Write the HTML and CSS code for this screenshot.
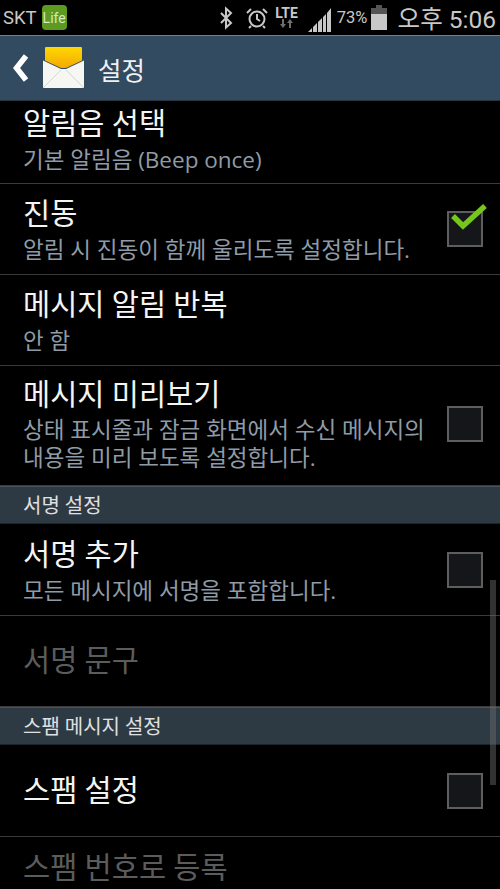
FILE: index.html
```html
<!DOCTYPE html>
<html lang="ko">
    <head>
        <meta charset="UTF-8" />
        <meta name="viewport" content="width=device-width, initial-scale=1.0" />
        <link rel="stylesheet" href="styles.css">
        <title>설정</title>
    </head>
    <body>
        <div class="status-bar">
            <span class="carrier">SKT</span>
            <span class="life-badge"><span>Life</span></span>
            <svg class="ic-bluetooth" width="14" height="24" viewBox="0 0 14 22">
                <path d="M2 6l10 10-5 4.500V1.500l5 4.500L2 16" fill="none" stroke="#c8c8c8" stroke-width="2"/>
            </svg>
            <svg class="ic-alarm" width="22" height="22" viewBox="0 0 22 22">
                <circle cx="11" cy="12" r="7.500" fill="none" stroke="#c8c8c8" stroke-width="2"/>
                <path d="M11 7v5l3 2M1 6l4-4M21 6l-4-4M5 19l-2 2M17 19l2 2" fill="none" stroke="#c8c8c8" stroke-width="2"/>
            </svg>
            <div class="lte">
                <span>LTE</span>
                <svg width="14" height="9" viewBox="0 0 14 9">
                    <path d="M3 9L0 5h2V0h2v5h2zM10 0l3 4h-2v5H9V4H7z" fill="#6e6e6e"/>
                </svg>
            </div>
            <svg class="ic-signal" width="23" height="24" viewBox="0 0 23 24">
                <path d="M0 24l4-4v4zM5 24v-5l4-4v9zM10 24V14l4-4v14zM15 24V9l3-3v18zM19 24V5l4-5v24z" fill="#c8c8c8"/>
            </svg>
            <span class="battery-pct">73%</span>
            <div class="battery"><div class="battery-fill"></div></div>
            <span class="clock">오후 5:06</span>
        </div>

        <div class="action-bar">
            <svg class="ic-back" width="16" height="28" viewBox="0 0 16 28">
                <path d="M14 2L4.500 14l9.500 12" fill="none" stroke="#fff" stroke-width="5.500"/>
            </svg>
            <svg class="ic-mail" width="42" height="42" viewBox="0 0 42 42">
                <defs>
                    <linearGradient id="flap" x1="0" y1="0" x2="0" y2="1">
                        <stop offset="0" stop-color="#ffd800"/>
                        <stop offset="1" stop-color="#f5a800"/>
                    </linearGradient>
                </defs>
                <path d="M0 13.500L18 22h5l18-8.500V40a1 1 0 0 1-1 1H1a1 1 0 0 1-1-1z" fill="#f6f6f2"/>
                <path d="M3 0h35a1 1 0 0 1 1 1v12.500L23 21h-5L2 13.500V1a1 1 0 0 1 1-1z" fill="url(#flap)"/>
                <path d="M1 40l17-17M40 40L23 23" stroke="#d8d8d2" fill="none"/>
            </svg>
            <span class="action-title">설정</span>
        </div>

        <div class="list">
            <div class="row row-clipped">
                <div class="row-text">
                    <p class="title">알림음 선택</p>
                    <p class="sub">기본 알림음 (Beep once)</p>
                </div>
            </div>
            <div class="row">
                <div class="row-text">
                    <p class="title">진동</p>
                    <p class="sub">알림 시 진동이 함께 울리도록 설정합니다.</p>
                </div>
                <div class="checkbox">
                    <svg class="check" width="38" height="28" viewBox="0 0 38 28">
                        <path d="M3 12l10 10L35 2" fill="none" stroke="#76c61d" stroke-width="5.500"/>
                    </svg>
                </div>
            </div>
            <div class="row">
                <div class="row-text">
                    <p class="title">메시지 알림 반복</p>
                    <p class="sub">안 함</p>
                </div>
            </div>
            <div class="row row-tall">
                <div class="row-text">
                    <p class="title">메시지 미리보기</p>
                    <p class="sub">상태 표시줄과 잠금 화면에서 수신 메시지의<br>내용을 미리 보도록 설정합니다.</p>
                </div>
                <div class="checkbox"></div>
            </div>
            <div class="section">서명 설정</div>
            <div class="row row-wide">
                <div class="row-text">
                    <p class="title">서명 추가</p>
                    <p class="sub">모든 메시지에 서명을 포함합니다.</p>
                </div>
                <div class="checkbox"></div>
            </div>
            <div class="row">
                <div class="row-text">
                    <p class="title disabled">서명 문구</p>
                </div>
            </div>
            <div class="section">스팸 메시지 설정</div>
            <div class="row row-wide">
                <div class="row-text">
                    <p class="title">스팸 설정</p>
                </div>
                <div class="checkbox"></div>
            </div>
            <div class="row row-last">
                <div class="row-text">
                    <p class="title disabled">스팸 번호로 등록</p>
                </div>
            </div>
            <div class="scrollbar"></div>
        </div>
    </body>
</html>
```

FILE: styles.css
```css
* {
    padding: 0;
    margin: 0;
    box-sizing: border-box;
}

html,
body {
    height: 100%;
    overflow: hidden;
}

body {
    background: #000;
    font-family: "Roboto", "Noto Sans CJK KR", sans-serif;
    color: #fff;
}

.status-bar {
    height: 35px;
    display: flex;
    align-items: center;
    padding: 0 4px 0 3px;
    color: #c8c8c8;
}

.carrier {
    font-size: 18.500px;
}

.life-badge {
    width: 25px;
    height: 25px;
    margin-left: 5px;
    border-radius: 4px;
    background: #5c9a22;
    color: #d8e8c0;
    font-size: 14px;
    display: flex;
    align-items: center;
    justify-content: center;
}

.ic-bluetooth {
    margin-left: 152px;
}

.ic-alarm {
    margin-left: 13px;
}

.lte {
    width: 24px;
    margin-left: 7px;
    display: flex;
    flex-direction: column;
    align-items: center;
    font-size: 14px;
    font-weight: 700;
    line-height: 12px;
}

.ic-signal {
    margin-left: 9px;
    margin-top: 4px;
}

.battery-pct {
    margin-left: 6px;
    font-size: 16.500px;
}

.battery {
    position: relative;
    width: 16px;
    height: 22px;
    margin-left: 4px;
    margin-top: 3px;
    background: #555;
}

.battery::before {
    content: "";
    position: absolute;
    top: -3px;
    left: 5px;
    width: 6px;
    height: 3px;
    background: #555;
}

.battery-fill {
    position: absolute;
    left: 0;
    right: 0;
    bottom: 0;
    height: 73%;
    background: #c8c8c8;
}

.clock {
    margin-left: auto;
    font-size: 24.500px;
    white-space: nowrap;
}

.action-bar {
    height: 66px;
    display: flex;
    align-items: center;
    background: #334b60;
    border-top: 1px solid #6c8294;
    border-bottom: 1px solid #26333f;
}

.ic-back {
    margin-left: 12px;
}

.ic-mail {
    margin-left: 15px;
}

.action-title {
    margin-left: 13px;
    font-size: 25.500px;
    color: #f0f0f0;
}

.list {
    position: relative;
    height: 788px;
    overflow: hidden;
}

.row {
    height: 91px;
    padding: 0 17px 0 23px;
    display: flex;
    align-items: center;
    border-bottom: 1px solid #3a3a3a;
}

.row-clipped {
    height: 83px;
}

.row-clipped .row-text {
    margin-top: -6px;
}

.row-wide {
    height: 92px;
}

.row-tall {
    height: 120px;
}

.row-tall .row-text {
    margin-top: -5px;
}

.row-tall .title {
    margin-bottom: 1px;
}

.row-tall .sub {
    line-height: 28px;
}

.row-tall .checkbox {
    margin-top: -3px;
}

.row-last {
    height: 52px;
    padding-top: 12px;
    align-items: flex-start;
    border-bottom: 0;
}

.row-text {
    flex: 1;
}

.title {
    font-size: 29.500px;
    line-height: 38px;
    color: #f4f4f4;
}

.title.disabled {
    color: #5c5c5c;
}

.sub {
    margin-top: 2px;
    margin-bottom: -2px;
    font-family: "Open Sans", "Noto Sans CJK KR", sans-serif;
    font-size: 22.500px;
    line-height: 30px;
    color: #8f9ba6;
}

.checkbox {
    position: relative;
    width: 36px;
    height: 36px;
    background: #14161a;
    border: 2px solid #5e5e5e;
}

.check {
    position: absolute;
    top: -9px;
    left: 1px;
}

.section {
    height: 38px;
    display: flex;
    align-items: center;
    padding: 0 0 2px 23px;
    font-size: 20px;
    color: #e0e0e0;
    background: #2d3a44;
    border-top: 1px solid #46545f;
    border-bottom: 1px solid #1d252b;
}

.scrollbar {
    position: absolute;
    top: 479px;
    right: 4px;
    width: 6px;
    height: 205px;
    background: rgba(110, 110, 110, 0.45);
}
```
